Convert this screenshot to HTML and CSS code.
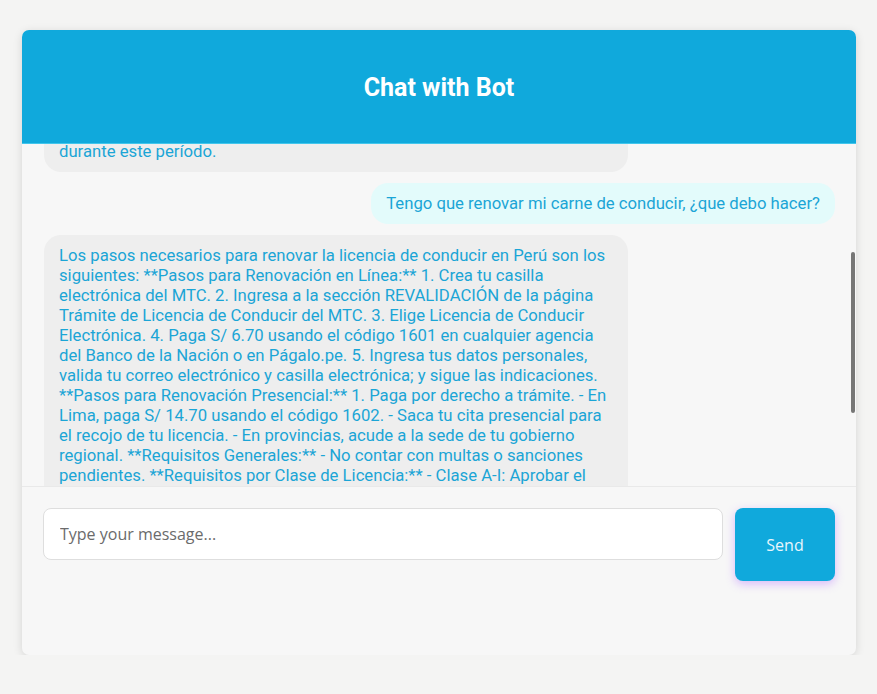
FILE: index.html
```html
<!DOCTYPE html>
<html lang="es">
<head>
<meta charset="utf-8">
<title>Chat with Bot</title>
<link rel="stylesheet" href="styles.css">
</head>
<body>
<div class="chat-card">
  <header class="chat-header">
    <h1 class="chat-title">Chat with Bot</h1>
  </header>
  <div class="chat-messages" id="messages">
    <div class="msg msg-bot">Para obtener información actualizada sobre los trámites de licencias de conducir, te recomendamos revisar la página oficial del Ministerio de Transportes y Comunicaciones (MTC), ya que los plazos y requisitos pueden variar<br>durante este período.</div>
    <div class="msg msg-user" id="user-msg">Tengo que renovar mi carne de conducir, ¿que debo hacer?</div>
    <div class="msg msg-bot">Los pasos necesarios para renovar la licencia de conducir en Perú son los siguientes: **Pasos para Renovación en Línea:** 1. Crea tu casilla electrónica del MTC. 2. Ingresa a la sección REVALIDACIÓN de la página Trámite de Licencia de Conducir del MTC. 3. Elige Licencia de Conducir Electrónica. 4. Paga S/ 6.70 usando el código 1601 en cualquier agencia del Banco de la Nación o en Págalo.pe. 5. Ingresa tus datos personales, valida tu correo electrónico y casilla electrónica; y sigue las indicaciones. **Pasos para Renovación Presencial:** 1. Paga por derecho a trámite. - En Lima, paga S/ 14.70 usando el código 1602. - Saca tu cita presencial para el recojo de tu licencia. - En provincias, acude a la sede de tu gobierno regional. **Requisitos Generales:** - No contar con multas o sanciones pendientes. **Requisitos por Clase de Licencia:** - Clase A-I: Aprobar el examen médico en un centro de salud autorizado. - Clase A-IIa, A-IIb, A-IIIa, A-IIIb y A-IIIc: Aprobar el examen médico y el examen de normas de tránsito. **Información Adicional:** - Puedes revalidar tu licencia hasta 6 meses antes de su fecha de vencimiento.</div>
  </div>
  <div class="scroll-thumb" aria-hidden="true"></div>
  <div class="chat-input-area">
    <input class="chat-input" type="text" placeholder="Type your message...">
    <button class="send-btn" type="button">Send</button>
  </div>
</div>
<script src="script.js"></script>
</body>
</html>
```
FILE: styles.css
```css
* { box-sizing: border-box; }
html, body { margin: 0; padding: 0; }
body {
  background: #f4f4f3;
  font-family: Roboto, "Liberation Sans", sans-serif;
  padding: 30px 21px 0 22px;
}
.chat-card {
  position: relative;
  width: 834px;
  height: 625px;
  background: #f7f7f7;
  border-radius: 7px;
  box-shadow: 0 2px 10px rgba(0,0,0,0.13);
  display: flex;
  flex-direction: column;
  overflow: hidden;
}
.chat-header {
  background: #10a9dc;
  height: 114px;
  flex: 0 0 114px;
  display: flex;
  align-items: center;
  justify-content: center;
  border-bottom: 1px solid #41c6ec;
}
.chat-title {
  margin: 0;
  color: #ffffff;
  font-family: Roboto, "Liberation Sans", sans-serif;
  font-weight: 700;
  font-size: 25px;
  line-height: 30px;
  padding-top: 2px;
}
.chat-messages {
  flex: 0 0 342px;
  height: 342px;
  overflow-y: auto;
  padding: 12px 21px 12px 22px;
  display: flex;
  flex-direction: column;
  gap: 11px;
}
.chat-messages::-webkit-scrollbar { width: 0; }
.scroll-thumb {
  position: absolute;
  left: 829px;
  top: 222px;
  width: 4px;
  height: 161px;
  background: #767676;
  border-radius: 2px;
}
.msg {
  font-size: 16.7px;
  line-height: 20px;
  color: #1ba5d6;
  padding: 11px 15px 10px 15px;
  border-radius: 17px;
  flex: 0 0 auto;
}
.msg-bot {
  background: #eeeeee;
  align-self: flex-start;
  max-width: 584px;
}
.msg-user {
  background: #e3fbfb;
  align-self: flex-end;
  text-align: right;
}
.chat-input-area {
  flex: 1 1 auto;
  border-top: 1px solid #e9e9e9;
  padding: 21px 21px 0 21px;
  display: flex;
  align-items: flex-start;
  gap: 12px;
}
.chat-input {
  flex: 1 1 auto;
  height: 52px;
  border: 1px solid #dedede;
  border-radius: 8px;
  background: #ffffff;
  padding: 0 16px;
  font-family: "Open Sans", sans-serif;
  font-size: 16px;
  color: #333;
  outline: none;
}
.chat-input::placeholder { color: #6b6b6b; }
.send-btn {
  flex: 0 0 100px;
  width: 100px;
  height: 73px;
  border: none;
  border-radius: 8px;
  background: #10a9dc;
  color: #e6f6fc;
  font-family: "Open Sans", sans-serif;
  font-size: 16px;
  box-shadow: 0 3px 10px rgba(178, 110, 255, 0.45);
  cursor: pointer;
}
```
FILE: script.js
```js
(function () {
  var box = document.getElementById('messages');
  var user = document.getElementById('user-msg');
  box.scrollTop += Math.round(user.getBoundingClientRect().top - 183);
})();
```
